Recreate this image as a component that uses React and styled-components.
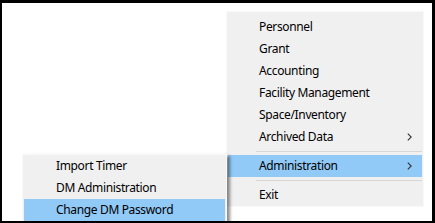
import styled, { createGlobalStyle } from 'styled-components'

const GlobalStyle = createGlobalStyle`
  html, body {
    margin: 0;
    padding: 0;
    background: #ffffff;
  }
  * {
    box-sizing: border-box;
  }
`;

const Screen = styled.div`
  position: relative;
  width: 435px;
  height: 223px;
  background: #ffffff;
  border-style: solid;
  border-color: #000000;
  border-width: 3px 3px 2px 2px;
  overflow: hidden;
  font-family: "Noto Sans", "Open Sans", sans-serif;
  font-size: 12px;
  letter-spacing: -0.35px;
  color: #000000;
`;

const Menu = styled.div`
  position: absolute;
  left: ${p => p.left}px;
  top: ${p => p.top}px;
  width: ${p => p.width}px;
  display: flex;
  flex-direction: column;
  background: #f0f0f0;
  border: 1px solid #f9f9f9;
  padding: ${p => p.padding || '0 1px'};
  box-shadow: ${p => (p.raised ? '3px 2px 3px rgba(0, 0, 0, 0.45)' : 'none')};
  z-index: ${p => (p.raised ? 2 : 1)};
`;

const Item = styled.div`
  display: flex;
  align-items: center;
  height: 22px;
  padding-left: ${p => p.indent}px;
  padding-right: 10px;
  background: ${p => (p.active ? '#91c9f7' : 'transparent')};
  white-space: nowrap;
`;

const Label = styled.span`
  flex: 1;
  line-height: 22px;
`;

const Separator = styled.div`
  height: 7px;
  display: flex;
  align-items: center;
  padding-left: 28px;

  &::after {
    content: '';
    flex: 1;
    height: 1px;
    background: #d7d7d7;
  }
`;

function Chevron() {
  return (
    <svg width="5" height="8" viewBox="0 0 5 8">
      <path d="M0.8 0.6 L4.2 4 L0.8 7.4" fill="none" stroke="#333" strokeWidth="1.1" />
    </svg>
  );
}

const mainItems = [
  'Personnel',
  'Grant',
  'Accounting',
  'Facility Management',
  'Space/Inventory',
];

const subItems = ['Import Timer', 'DM Administration', 'Change DM Password'];

export default function App() {
  return (
    <Screen>
      <GlobalStyle />
      <Menu left={224} top={8} width={198} padding="4px 1px 0 1px">
        {mainItems.map(t => (
          <Item key={t} indent={31}>
            <Label>{t}</Label>
          </Item>
        ))}
        <Item indent={31}>
          <Label>Archived Data</Label>
          <Chevron />
        </Item>
        <Separator />
        <Item indent={31} active>
          <Label>Administration</Label>
          <Chevron />
        </Item>
        <Separator />
        <Item indent={31}>
          <Label>Exit</Label>
        </Item>
      </Menu>
      <Menu left={20} top={151} width={205} raised>
        {subItems.map((t, i) => (
          <Item key={t} indent={32} active={i === 2}>
            <Label>{t}</Label>
          </Item>
        ))}
      </Menu>
    </Screen>
  );
}
